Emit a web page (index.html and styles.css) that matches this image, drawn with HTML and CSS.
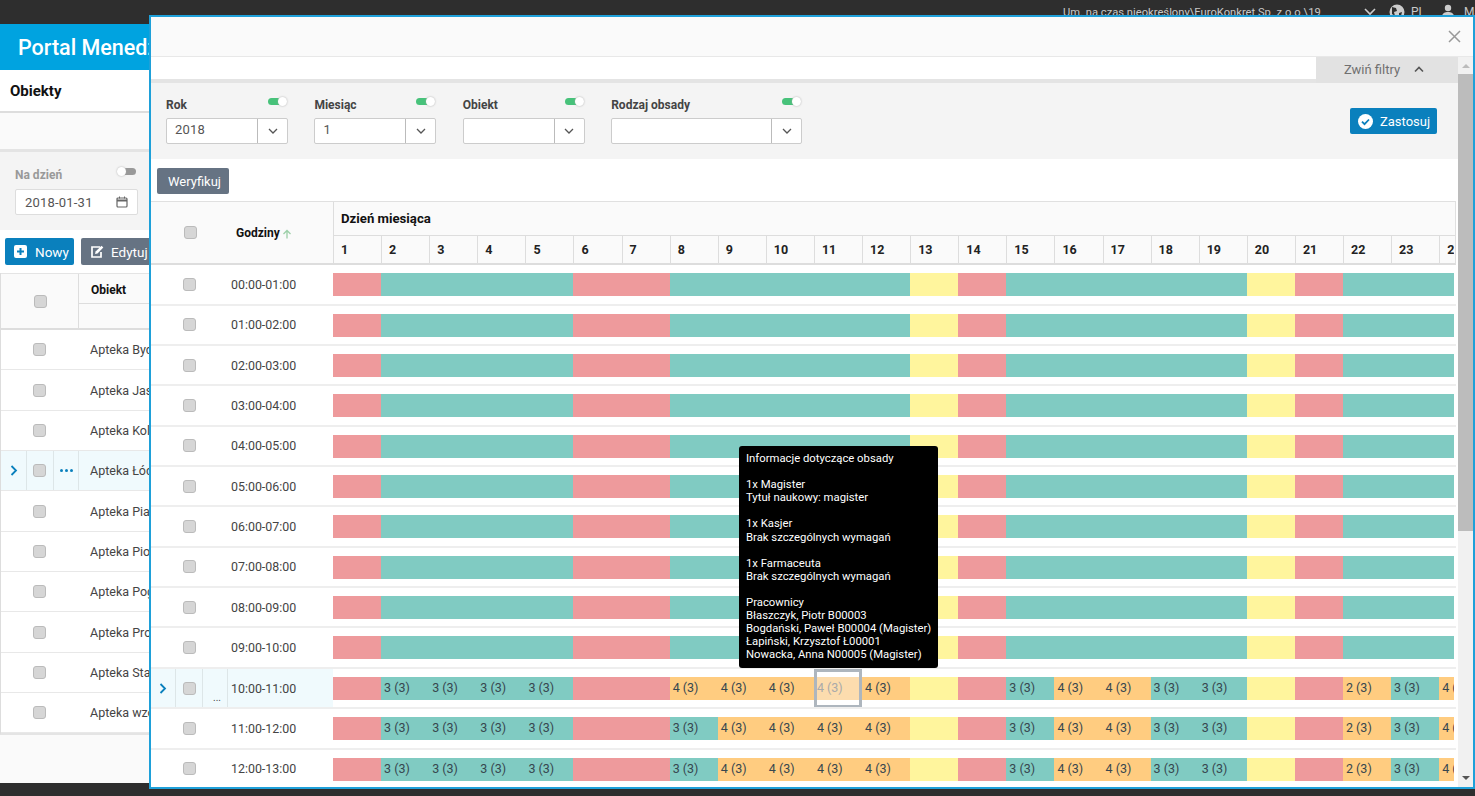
FILE: index.html
```html
<!DOCTYPE html>
<html lang="pl">
<head>
<meta charset="utf-8">
<title>Portal Menedżera</title>
<link rel="stylesheet" href="styles.css">
</head>
<body>
<div class="topbar">
  <span class="tb-text">Um. na czas nieokreślony\EuroKonkret Sp. z o.o.\19</span>
  <svg class="tb-chev" width="12" height="8" viewBox="0 0 12 8"><path d="M1 1l5 5 5-5" fill="none" stroke="#ccc" stroke-width="1.6"/></svg>
  <svg class="tb-globe" width="16" height="16" viewBox="0 0 16 16"><circle cx="8" cy="8" r="7.5" fill="#ccc"/><path d="M3 3l4 1 1 3-3 1 1 4-3-2zM10 9l3-1-1 4-2 1z" fill="#2e2e2e"/></svg>
  <span class="tb-lang">PL</span>
  <svg class="tb-user" width="14" height="14" viewBox="0 0 14 14"><circle cx="7" cy="4" r="3.2" fill="#ccc"/><path d="M1 13c0-4 3-5 6-5s6 1 6 5z" fill="#ccc"/></svg>
  <span class="tb-name">Marek</span>
</div>
<div class="page">
  <div class="brand">Portal Menedżera</div>
  <div class="title">Obiekty</div>
  <div class="strip"></div>
  <div class="pfilters">
    <div class="pf-head"><span>Na dzień</span><span class="toggle off"></span></div>
    <div class="dateinput"><span>2018-01-31</span>
      <svg width="12" height="12" viewBox="0 0 12 12"><rect x="1" y="2" width="10" height="9" rx="1" fill="none" stroke="#666" stroke-width="1.2"/><path d="M1 4.5h10" stroke="#666" stroke-width="2"/><path d="M3.500 .5v2M8.500 .5v2" stroke="#666"/></svg>
    </div>
  </div>
  <div class="pbuttons">
    <button class="btn blue"><svg width="13" height="13" viewBox="0 0 13 13"><rect width="13" height="13" rx="2" fill="#fff"/><path d="M6.500 3v7M3 6.500h7" stroke="#0a80bd" stroke-width="2"/></svg>Nowy</button>
    <button class="btn grey"><svg width="14" height="13" viewBox="0 0 14 13"><path d="M10 2H2v10h9V7" fill="none" stroke="#fff" stroke-width="1.700"/><path d="M5 9l.6-2.500L11.500.8l1.800 1.800L7.500 8.400z" fill="#fff"/></svg>Edytuj</button>
  </div>
  <div class="ptable">
    <div class="pt-head">
      <div class="pt-headcheck"><span class="cb"></span></div>
      <div class="pt-headcol"><div class="pt-headname">Obiekt</div><div class="pt-headfilter"></div></div>
    </div>
    <div class="pt-row"><span class="pt-c1"></span><span class="pt-c2"><span class="cb"></span></span><span class="pt-c3"></span><span class="pt-name">Apteka Bydgoszcz</span></div>
    <div class="pt-row"><span class="pt-c1"></span><span class="pt-c2"><span class="cb"></span></span><span class="pt-c3"></span><span class="pt-name">Apteka Jasna</span></div>
    <div class="pt-row"><span class="pt-c1"></span><span class="pt-c2"><span class="cb"></span></span><span class="pt-c3"></span><span class="pt-name">Apteka Kolejowa</span></div>
    <div class="pt-row sel"><span class="pt-c1"><svg width="8" height="11" viewBox="0 0 8 11"><path d="M1.500 1l4.500 4.500L1.500 10" fill="none" stroke="#0a80bd" stroke-width="1.800"/></svg></span><span class="pt-c2"><span class="cb"></span></span><span class="pt-c3"><span class="dots"><i></i><i></i><i></i></span></span><span class="pt-name">Apteka Łódź</span></div>
    <div class="pt-row"><span class="pt-c1"></span><span class="pt-c2"><span class="cb"></span></span><span class="pt-c3"></span><span class="pt-name">Apteka Piastowska</span></div>
    <div class="pt-row"><span class="pt-c1"></span><span class="pt-c2"><span class="cb"></span></span><span class="pt-c3"></span><span class="pt-name">Apteka Piotrkowska</span></div>
    <div class="pt-row"><span class="pt-c1"></span><span class="pt-c2"><span class="cb"></span></span><span class="pt-c3"></span><span class="pt-name">Apteka Pogodna</span></div>
    <div class="pt-row"><span class="pt-c1"></span><span class="pt-c2"><span class="cb"></span></span><span class="pt-c3"></span><span class="pt-name">Apteka Prosta</span></div>
    <div class="pt-row"><span class="pt-c1"></span><span class="pt-c2"><span class="cb"></span></span><span class="pt-c3"></span><span class="pt-name">Apteka Stara</span></div>
    <div class="pt-row"><span class="pt-c1"></span><span class="pt-c2"><span class="cb"></span></span><span class="pt-c3"></span><span class="pt-name">Apteka wzorcowa</span></div>
  </div>
</div>

<div class="modal">
  <div class="m-head"><svg width="13" height="13" viewBox="0 0 13 13"><path d="M1 1l11 11M12 1L1 12" stroke="#999" stroke-width="1.500"/></svg></div>
  <div class="m-body">
    <div class="m-main">
      <div class="collapse"><div class="collapse-btn"><span>Zwiń filtry</span><svg width="10" height="7" viewBox="0 0 10 7"><path d="M1 5.500l4-4 4 4" fill="none" stroke="#555" stroke-width="1.600"/></svg></div></div>
      <div class="filters">
        <div class="filter f-s"><div class="f-label"><span>Rok</span><span class="toggle"></span></div><div class="select"><span class="s-val">2018</span><span class="s-btn"><svg width="10" height="6" viewBox="0 0 10 6"><path d="M1 1l4 4 4-4" fill="none" stroke="#555" stroke-width="1.300"/></svg></span></div></div>
        <div class="filter f-s"><div class="f-label"><span>Miesiąc</span><span class="toggle"></span></div><div class="select"><span class="s-val">1</span><span class="s-btn"><svg width="10" height="6" viewBox="0 0 10 6"><path d="M1 1l4 4 4-4" fill="none" stroke="#555" stroke-width="1.300"/></svg></span></div></div>
        <div class="filter f-s"><div class="f-label"><span>Obiekt</span><span class="toggle"></span></div><div class="select"><span class="s-val"></span><span class="s-btn"><svg width="10" height="6" viewBox="0 0 10 6"><path d="M1 1l4 4 4-4" fill="none" stroke="#555" stroke-width="1.300"/></svg></span></div></div>
        <div class="filter f-l"><div class="f-label"><span>Rodzaj obsady</span><span class="toggle"></span></div><div class="select"><span class="s-val"></span><span class="s-btn"><svg width="10" height="6" viewBox="0 0 10 6"><path d="M1 1l4 4 4-4" fill="none" stroke="#555" stroke-width="1.300"/></svg></span></div></div>
        <button class="apply"><svg width="15" height="15" viewBox="0 0 15 15"><circle cx="7.500" cy="7.500" r="7.500" fill="#fff"/><path d="M4 7.700l2.500 2.500L11 5.500" fill="none" stroke="#0a80bd" stroke-width="1.800"/></svg>Zastosuj</button>
      </div>
      <div class="actions"><button class="btn grey verify">Weryfikuj</button></div>
      <div class="grid">
        <div class="g-head">
          <div class="g-headleft"><span class="cb"></span><span class="g-hours">Godziny</span><svg width="10" height="10" viewBox="0 0 10 10"><path d="M5 9.500V1.500M1.500 5L5 1.500 8.500 5" fill="none" stroke="#9ccfa8" stroke-width="1.300"/></svg></div>
          <div class="g-headright">
            <div class="g-group">Dzień miesiąca</div>
            <div class="g-days">
              <span>1</span><span>2</span><span>3</span><span>4</span><span>5</span><span>6</span><span>7</span><span>8</span><span>9</span><span>10</span><span>11</span><span>12</span><span>13</span><span>14</span><span>15</span><span>16</span><span>17</span><span>18</span><span>19</span><span>20</span><span>21</span><span>22</span><span>23</span><span>24</span>
            </div>
          </div>
        </div>
        <div class="g-row"><div class="g-left"><span class="cb"></span><span class="time">00:00-01:00</span></div><div class="cells"><b class="r"></b><b class="t"></b><b class="t"></b><b class="t"></b><b class="t"></b><b class="r"></b><b class="r"></b><b class="t"></b><b class="t"></b><b class="t"></b><b class="t"></b><b class="t"></b><b class="y"></b><b class="r"></b><b class="t"></b><b class="t"></b><b class="t"></b><b class="t"></b><b class="t"></b><b class="y"></b><b class="r"></b><b class="t"></b><b class="t"></b><b class="t"></b></div></div>
        <div class="g-row"><div class="g-left"><span class="cb"></span><span class="time">01:00-02:00</span></div><div class="cells"><b class="r"></b><b class="t"></b><b class="t"></b><b class="t"></b><b class="t"></b><b class="r"></b><b class="r"></b><b class="t"></b><b class="t"></b><b class="t"></b><b class="t"></b><b class="t"></b><b class="y"></b><b class="r"></b><b class="t"></b><b class="t"></b><b class="t"></b><b class="t"></b><b class="t"></b><b class="y"></b><b class="r"></b><b class="t"></b><b class="t"></b><b class="t"></b></div></div>
        <div class="g-row"><div class="g-left"><span class="cb"></span><span class="time">02:00-03:00</span></div><div class="cells"><b class="r"></b><b class="t"></b><b class="t"></b><b class="t"></b><b class="t"></b><b class="r"></b><b class="r"></b><b class="t"></b><b class="t"></b><b class="t"></b><b class="t"></b><b class="t"></b><b class="y"></b><b class="r"></b><b class="t"></b><b class="t"></b><b class="t"></b><b class="t"></b><b class="t"></b><b class="y"></b><b class="r"></b><b class="t"></b><b class="t"></b><b class="t"></b></div></div>
        <div class="g-row"><div class="g-left"><span class="cb"></span><span class="time">03:00-04:00</span></div><div class="cells"><b class="r"></b><b class="t"></b><b class="t"></b><b class="t"></b><b class="t"></b><b class="r"></b><b class="r"></b><b class="t"></b><b class="t"></b><b class="t"></b><b class="t"></b><b class="t"></b><b class="y"></b><b class="r"></b><b class="t"></b><b class="t"></b><b class="t"></b><b class="t"></b><b class="t"></b><b class="y"></b><b class="r"></b><b class="t"></b><b class="t"></b><b class="t"></b></div></div>
        <div class="g-row"><div class="g-left"><span class="cb"></span><span class="time">04:00-05:00</span></div><div class="cells"><b class="r"></b><b class="t"></b><b class="t"></b><b class="t"></b><b class="t"></b><b class="r"></b><b class="r"></b><b class="t"></b><b class="t"></b><b class="t"></b><b class="t"></b><b class="t"></b><b class="y"></b><b class="r"></b><b class="t"></b><b class="t"></b><b class="t"></b><b class="t"></b><b class="t"></b><b class="y"></b><b class="r"></b><b class="t"></b><b class="t"></b><b class="t"></b></div></div>
        <div class="g-row"><div class="g-left"><span class="cb"></span><span class="time">05:00-06:00</span></div><div class="cells"><b class="r"></b><b class="t"></b><b class="t"></b><b class="t"></b><b class="t"></b><b class="r"></b><b class="r"></b><b class="t"></b><b class="t"></b><b class="t"></b><b class="t"></b><b class="t"></b><b class="y"></b><b class="r"></b><b class="t"></b><b class="t"></b><b class="t"></b><b class="t"></b><b class="t"></b><b class="y"></b><b class="r"></b><b class="t"></b><b class="t"></b><b class="t"></b></div></div>
        <div class="g-row"><div class="g-left"><span class="cb"></span><span class="time">06:00-07:00</span></div><div class="cells"><b class="r"></b><b class="t"></b><b class="t"></b><b class="t"></b><b class="t"></b><b class="r"></b><b class="r"></b><b class="t"></b><b class="t"></b><b class="t"></b><b class="t"></b><b class="t"></b><b class="y"></b><b class="r"></b><b class="t"></b><b class="t"></b><b class="t"></b><b class="t"></b><b class="t"></b><b class="y"></b><b class="r"></b><b class="t"></b><b class="t"></b><b class="t"></b></div></div>
        <div class="g-row"><div class="g-left"><span class="cb"></span><span class="time">07:00-08:00</span></div><div class="cells"><b class="r"></b><b class="t"></b><b class="t"></b><b class="t"></b><b class="t"></b><b class="r"></b><b class="r"></b><b class="t"></b><b class="t"></b><b class="t"></b><b class="t"></b><b class="t"></b><b class="y"></b><b class="r"></b><b class="t"></b><b class="t"></b><b class="t"></b><b class="t"></b><b class="t"></b><b class="y"></b><b class="r"></b><b class="t"></b><b class="t"></b><b class="t"></b></div></div>
        <div class="g-row"><div class="g-left"><span class="cb"></span><span class="time">08:00-09:00</span></div><div class="cells"><b class="r"></b><b class="t"></b><b class="t"></b><b class="t"></b><b class="t"></b><b class="r"></b><b class="r"></b><b class="t"></b><b class="t"></b><b class="t"></b><b class="t"></b><b class="t"></b><b class="y"></b><b class="r"></b><b class="t"></b><b class="t"></b><b class="t"></b><b class="t"></b><b class="t"></b><b class="y"></b><b class="r"></b><b class="t"></b><b class="t"></b><b class="t"></b></div></div>
        <div class="g-row"><div class="g-left"><span class="cb"></span><span class="time">09:00-10:00</span></div><div class="cells"><b class="r"></b><b class="t"></b><b class="t"></b><b class="t"></b><b class="t"></b><b class="r"></b><b class="r"></b><b class="t"></b><b class="t"></b><b class="t"></b><b class="t"></b><b class="t"></b><b class="y"></b><b class="r"></b><b class="t"></b><b class="t"></b><b class="t"></b><b class="t"></b><b class="t"></b><b class="y"></b><b class="r"></b><b class="t"></b><b class="t"></b><b class="t"></b></div></div>
        <div class="g-row"><div class="g-left sel"><span class="sel1"><svg width="8" height="11" viewBox="0 0 8 11"><path d="M1.500 1l4.500 4.500L1.500 10" fill="none" stroke="#0a80bd" stroke-width="1.800"/></svg></span><span class="sel2"><span class="cb"></span></span><span class="sel3">...</span><span class="time">10:00-11:00</span></div><div class="cells"><b class="r"></b><b class="t">3 (3)</b><b class="t">3 (3)</b><b class="t">3 (3)</b><b class="t">3 (3)</b><b class="r"></b><b class="r"></b><b class="o">4 (3)</b><b class="o">4 (3)</b><b class="o">4 (3)</b><b class="h">4 (3)</b><b class="o">4 (3)</b><b class="y"></b><b class="r"></b><b class="t">3 (3)</b><b class="o">4 (3)</b><b class="o">4 (3)</b><b class="t">3 (3)</b><b class="t">3 (3)</b><b class="y"></b><b class="r"></b><b class="o">2 (3)</b><b class="t">3 (3)</b><b class="o">4 (3)</b></div></div>
        <div class="g-row"><div class="g-left"><span class="cb"></span><span class="time">11:00-12:00</span></div><div class="cells"><b class="r"></b><b class="t">3 (3)</b><b class="t">3 (3)</b><b class="t">3 (3)</b><b class="t">3 (3)</b><b class="r"></b><b class="r"></b><b class="t">3 (3)</b><b class="o">4 (3)</b><b class="o">4 (3)</b><b class="o">4 (3)</b><b class="o">4 (3)</b><b class="y"></b><b class="r"></b><b class="t">3 (3)</b><b class="o">4 (3)</b><b class="o">4 (3)</b><b class="t">3 (3)</b><b class="t">3 (3)</b><b class="y"></b><b class="r"></b><b class="o">2 (3)</b><b class="t">3 (3)</b><b class="o">4 (3)</b></div></div>
        <div class="g-row"><div class="g-left"><span class="cb"></span><span class="time">12:00-13:00</span></div><div class="cells"><b class="r"></b><b class="t">3 (3)</b><b class="t">3 (3)</b><b class="t">3 (3)</b><b class="t">3 (3)</b><b class="r"></b><b class="r"></b><b class="t">3 (3)</b><b class="o">4 (3)</b><b class="o">4 (3)</b><b class="o">4 (3)</b><b class="o">4 (3)</b><b class="y"></b><b class="r"></b><b class="t">3 (3)</b><b class="o">4 (3)</b><b class="o">4 (3)</b><b class="t">3 (3)</b><b class="t">3 (3)</b><b class="y"></b><b class="r"></b><b class="o">2 (3)</b><b class="t">3 (3)</b><b class="o">4 (3)</b></div></div>
      </div>
    </div>
    <div class="scrollbar">
      <span class="sb-up"></span>
      <span class="sb-thumb"></span>
      <span class="sb-down"></span>
    </div>
  </div>
</div>

<div class="tooltip">Informacje dotyczące obsady<br><br>1x Magister<br>Tytuł naukowy: magister<br><br>1x Kasjer<br>Brak szczególnych wymagań<br><br>1x Farmaceuta<br>Brak szczególnych wymagań<br><br>Pracownicy<br>Błaszczyk, Piotr B00003<br>Bogdański, Paweł B00004 (Magister)<br>Łapiński, Krzysztof Ł00001<br>Nowacka, Anna N00005 (Magister)</div>
</body>
</html>
```
FILE: styles.css
```css
* { box-sizing: border-box; }
html, body { margin: 0; height: 796px; overflow: hidden; }
body { background: #2e2e2e; font-family: Roboto, "Liberation Sans", sans-serif; font-size: 12px; color: #444; position: relative; }
button { font-family: inherit; border: 0; cursor: pointer; }

.topbar { height: 24px; display: flex; align-items: flex-start; padding: 6px 0 0 1063px; color: #c8c8c8; font-size: 11.200px; white-space: nowrap; overflow: hidden; }
.topbar > * { flex: none; }
.tb-text { width: 301px; line-height: 13px; }
.tb-chev { margin: 2px 0 0 0; }
.tb-globe { margin: -2px 0 0 13px; }
.tb-lang { margin-left: 6px; font-size: 12px; line-height: 13px; width: 24px; }
.tb-user { margin: -2px 0 0 6px; }
.tb-name { margin-left: 9px; font-size: 12px; line-height: 13px; }

.page { height: 759px; background: #fafafa; display: flex; flex-direction: column; }
.brand { height: 46px; background: #00a3e0; color: #fff; font-size: 21.500px; font-weight: 500; line-height: 48px; padding-left: 18px; white-space: nowrap; }
.title { height: 43px; background: #fff; border-bottom: 2px solid #ddd; color: #111; font-size: 15px; font-weight: 700; line-height: 42px; padding-left: 10px; }
.strip { height: 39px; background: #fafafa; border-bottom: 3px solid #e4e4e4; }
.pfilters { height: 78px; background: #f4f4f4; padding: 15px 0 0 15px; }
.pf-head { width: 121px; display: flex; justify-content: space-between; color: #999; font-weight: 700; align-items: flex-start; line-height: 16px; }
.pf-head .toggle { margin-top: 1px; }
.dateinput { width: 123px; height: 26px; margin-top: 6px; border: 1px solid #ddd; border-radius: 2px; background: #fff; display: flex; justify-content: space-between; align-items: center; padding: 0 9px; color: #555; font-size: 13px; letter-spacing: .2px; }
.pbuttons { height: 43px; background: #fff; display: flex; gap: 7px; padding: 8px 0 0 5px; }

.btn { height: 27px; border-radius: 2px; color: #fff; font-size: 13.500px; display: flex; align-items: center; gap: 8px; padding: 0 0 0 9px; }
.btn svg { flex: none; }
.blue { background: #0a80bd; width: 69px; }
.grey { background: #667383; width: 90px; gap: 7px; }

.ptable { background: #fff; border-left: 1px solid #ddd; border-bottom: 2px solid #e4e4e4; display: flex; flex-direction: column; }
.pt-head { height: 57px; display: flex; background: #fafafa; border-top: 1px solid #e4e4e4; border-bottom: 2px solid #ddd; }
.pt-headcheck { width: 78px; border-right: 1px solid #ddd; display: flex; align-items: center; justify-content: center; padding-left: 1px; }
.pt-headcol { flex: 1; display: flex; flex-direction: column; }
.pt-headname { height: 30px; border-bottom: 1px solid #ddd; font-weight: 700; color: #111; line-height: 32px; padding-left: 12px; }
.pt-row { height: 40.350px; display: flex; align-items: center; border-bottom: 1px solid #e8e8e8; }
.pt-row.sel { background: #f0fafd; }
.pt-c1 { width: 26px; height: 100%; display: flex; align-items: center; justify-content: center; }
.pt-c2 { width: 27px; height: 100%; display: flex; align-items: center; justify-content: center; padding-right: 2px; }
.pt-c3 { width: 25px; height: 100%; display: flex; align-items: center; justify-content: center; }
.sel .pt-c1, .sel .pt-c2, .sel .pt-c3 { border-right: 1px solid #dde6e8; }
.pt-name { margin-left: 11px; font-size: 12.500px; white-space: nowrap; color: #444; }
.dots { display: flex; gap: 2px; }
.dots i { width: 3px; height: 3px; border-radius: 50%; background: #0a80bd; }

.cb { display: block; width: 13px; height: 13px; flex: none; border: 1px solid #bbb; border-radius: 3px; background: #d6d6d6; }

.toggle { display: block; width: 18px; height: 7px; border-radius: 4px; background: #47c27a; position: relative; flex: none; }
.toggle::after { content: ""; position: absolute; right: -1px; top: -1px; width: 9px; height: 9px; border-radius: 50%; background: #fff; box-shadow: 0 0 2px #aaa; }
.toggle.off { background: #999; }
.toggle.off::after { right: auto; left: -1px; }

.modal { position: absolute; left: 149px; top: 15px; width: 1326px; height: 774px; border: 2px solid #1ea0d9; background: #fff; display: flex; flex-direction: column; overflow: hidden; }
.m-head { height: 40px; flex: none; background: #fafafa; border-bottom: 1px solid #e8e8e8; display: flex; align-items: center; justify-content: flex-end; padding-right: 12px; }
.m-body { flex: 1; display: flex; min-height: 0; }
.m-main { width: 1307px; flex: none; overflow: hidden; display: flex; flex-direction: column; }
.collapse { height: 26px; flex: none; background: #fff; border-bottom: 4px solid #e4e4e4; display: flex; justify-content: flex-end; }
.collapse-btn { width: 142px; height: 26px; background: #e2e2e2; display: flex; align-items: center; justify-content: center; gap: 14px; color: #707070; font-size: 13px; padding: 0 6px 2px 0; }
.filters { height: 76px; flex: none; background: #f4f4f4; display: flex; padding: 14px 20px 0 15px; align-items: flex-start; }
.filter { margin-right: 26.400px; }
.f-s { width: 122px; }
.f-l { width: 191px; }
.f-label { display: flex; justify-content: space-between; color: #444; font-weight: 700; line-height: 16px; height: 21px; padding-right: 2px; }
.f-label .toggle { margin-top: 1px; }
.select { height: 26px; display: flex; background: #fff; border: 1px solid #ccc; border-radius: 2px; color: #555; font-size: 13px; letter-spacing: .2px; }
.s-val { flex: 1; padding-left: 8px; line-height: 22px; }
.s-btn { width: 30px; border-left: 1px solid #bbb; display: flex; align-items: center; justify-content: center; }
.apply { margin: 11px 1px 0 auto; width: 87px; height: 26px; background: #0a80bd; color: #fff; border-radius: 2px; font-size: 13px; display: flex; align-items: center; gap: 7px; padding: 0 0 0 8px; white-space: nowrap; }

.actions { height: 42px; flex: none; padding: 9px 0 0 6px; }
.verify { width: 72px; height: 26px; padding-left: 11px; font-size: 13px; }

.grid { display: flex; flex-direction: column; flex: none; width: 1305px; }
.g-head { height: 64.400px; flex: none; display: flex; background: #fafafa; border: 1px solid #e0e0e0; border-bottom: 2px solid #ddd; border-left: 0; }
.g-headleft { width: 183px; flex: none; display: flex; align-items: center; padding: 0 0 0 33px; border-right: 1px solid #ddd; }
.g-hours { font-weight: 700; color: #111; margin-left: 39px; margin-right: 2px; }
.g-headleft svg { margin-top: 3px; }
.g-headright { flex: 1; min-width: 0; overflow: hidden; display: flex; flex-direction: column; }
.g-group { height: 34px; border-bottom: 1px solid #ddd; font-weight: 700; color: #111; line-height: 34px; padding-left: 7px; font-size: 13.200px; }
.g-days { flex: 1; display: flex; width: 1120px; overflow: hidden; }
.g-days span { width: 48.100px; flex: none; border-right: 1px solid #ddd; padding-left: 7px; line-height: 28px; font-size: 12.500px; font-weight: 700; color: #222; }
.g-days span:last-child { border: 0; }

.g-row { height: 40.350px; flex: none; display: flex; border-bottom: 2px solid #eee; }
.g-left { width: 182px; height: 38.350px; flex: none; display: flex; align-items: center; padding-left: 32px; }
.g-left .time { margin-left: 35px; color: #444; font-size: 12.400px; }
.g-left.sel { padding-left: 0; background: #f0fafd; }
.g-left.sel .time { margin-left: 3px; }
.sel1, .sel2, .sel3 { height: 100%; display: flex; align-items: center; justify-content: center; border-right: 1px solid #dde6e8; flex: none; }
.sel1 { width: 25px; }
.sel2 { width: 27px; }
.sel3 { width: 25px; align-items: flex-end; padding: 0 0 4px 4px; line-height: 10px; font-size: 10px; }
.cells { display: flex; width: 1121px; overflow: hidden; padding-top: 8px; flex: none; }
.cells b { display: block; width: 48.100px; height: 23px; flex: none; font-weight: 400; font-size: 12.500px; line-height: 22px; padding-left: 3px; color: #37474f; white-space: nowrap; overflow: hidden; }
.r { background: #ee9a9c; }
.t { background: #80cbc2; }
.y { background: #fff59d; }
.o { background: #ffcc80; }
.cells b.h { background: #fcdcae; color: #aaa; position: relative; overflow: visible; }
.cells b.h::after { content: ""; position: absolute; left: 0; right: 0; top: -8px; bottom: -8px; border: 3px solid #aeb6be; }

.scrollbar { flex: 1; background: #f1f1f1; display: flex; flex-direction: column; align-items: center; }
.sb-up { width: 0; height: 0; margin-top: 7px; border: 4px solid transparent; border-top: 0; border-bottom: 4px solid #bbb; flex: none; }
.sb-thumb { width: 15px; height: 457px; margin-top: 6px; background: #bcbcbc; flex: none; }
.sb-down { width: 0; height: 0; margin-top: auto; margin-bottom: 7px; border: 4px solid transparent; border-bottom: 0; border-top: 4px solid #555; flex: none; }

.tooltip { position: absolute; left: 739px; top: 446px; width: 199px; height: 222px; background: #000; color: #fff; border-radius: 3px; padding: 6px 0 0 7px; font-size: 11.300px; line-height: 13.100px; white-space: nowrap; }
```
